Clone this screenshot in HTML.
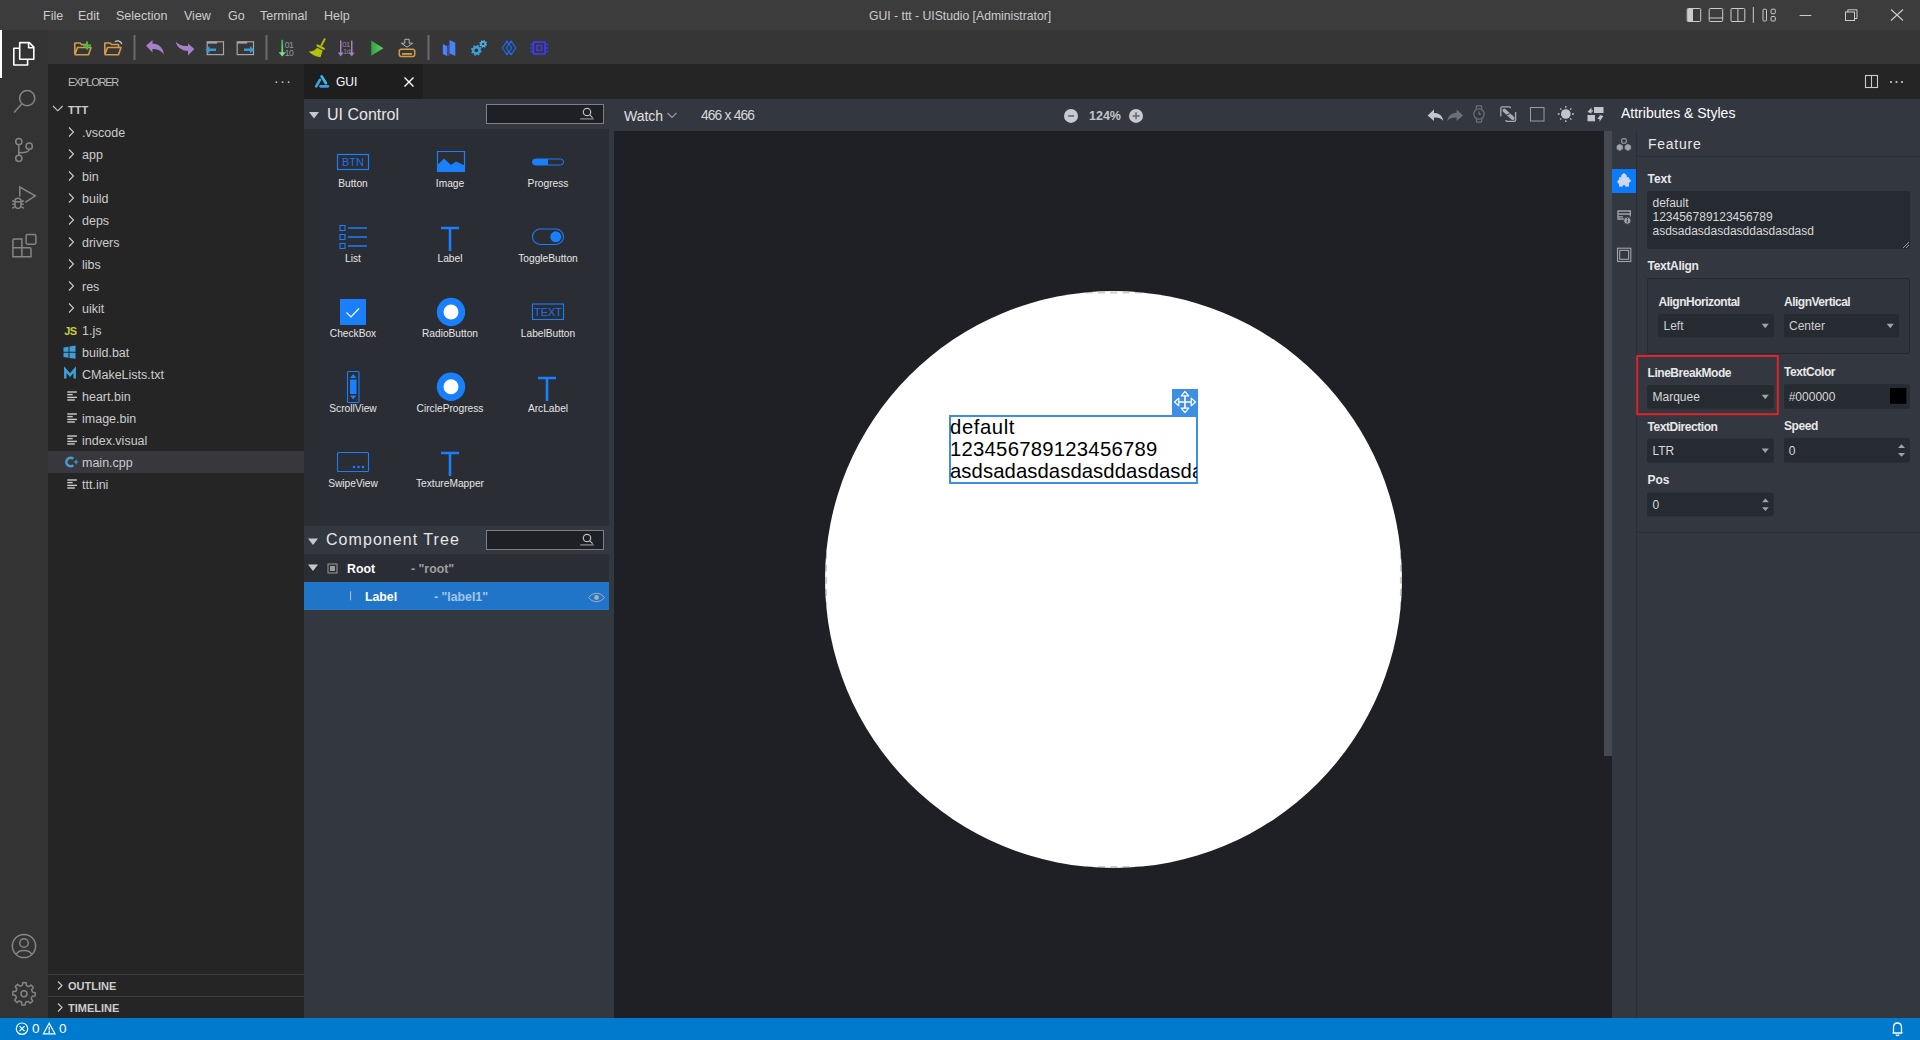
<!DOCTYPE html>
<html><head><meta charset="utf-8">
<style>
*{box-sizing:border-box;margin:0;padding:0}
html,body{width:1920px;height:1040px;overflow:hidden;background:#1e2025;font-family:"Liberation Sans",sans-serif}
.a{position:absolute}
svg{position:absolute;overflow:visible}
#title{left:0;top:0;width:1920px;height:30px;background:#3c3c3c}
.menu{top:8px;font-size:12.5px;color:#cccccc;line-height:16px}
#actbar{left:0;top:30px;width:48px;height:988px;background:#333333}
#toolbar{left:48px;top:30px;width:1872px;height:34px;background:#363636}
#side{left:48px;top:64px;width:256px;height:954px;background:#252526}
.row{left:48px;width:256px;height:22px;font-size:12.5px;color:#cccccc;line-height:22px}
#tabs{left:304px;top:64px;width:1616px;height:35px;background:#252526}
#status{left:0;top:1018px;width:1920px;height:22px;background:#007acc}
#uic{left:304px;top:99px;width:310px;height:919px;background:#333740}
#grid{left:304px;top:129px;width:305px;height:397px;background:#2a2d34}
#tree{left:304px;top:554px;width:305px;height:56px;background:#2a2d34}
#wbar{left:614px;top:99px;width:1306px;height:32px;background:#333740}
#canvas{left:614px;top:131px;width:998px;height:887px;background:#1e2025}
#attr{left:1604px;top:131px;width:316px;height:887px;background:#333740}
.gl{font-size:10.2px;color:#e6e6e6;text-align:center;width:98px;line-height:12px}
.lab{font-size:12px;font-weight:bold;color:#e8e8e8;line-height:14px}
.sel{background:#262a31;height:24px;font-size:12px;color:#cfcfcf;line-height:24px;padding-left:6px;border-radius:2px}
</style></head><body>
<!-- TITLE BAR -->
<div id="title" class="a"></div>
<div class="a menu" style="left:43px">File</div>
<div class="a menu" style="left:78px">Edit</div>
<div class="a menu" style="left:116px">Selection</div>
<div class="a menu" style="left:184px">View</div>
<div class="a menu" style="left:228px">Go</div>
<div class="a menu" style="left:260px">Terminal</div>
<div class="a menu" style="left:324px">Help</div>
<div class="a menu" style="left:869px;font-size:12.2px">GUI - ttt - UIStudio [Administrator]</div>

<div id="actbar" class="a"></div>
<div id="toolbar" class="a"></div>

<!-- TOOLBAR ICONS -->
<svg style="left:0;top:0" width="1920" height="64">
 <!-- window controls -->
 <g fill="none" stroke="#cccccc" stroke-width="1">
  <rect x="1687.2" y="8.5" width="13.5" height="13" rx="1"/>
  <rect x="1709.2" y="8.5" width="13.5" height="13" rx="1"/><path d="M1709.2 18 H1722.7"/>
  <rect x="1731" y="8.5" width="13.8" height="13" rx="1"/><path d="M1737.9 8.5 V21.5"/>
  <path d="M1753.3 7 V22.8"/>
  <rect x="1763" y="9.2" width="3.5" height="11.8" rx="1"/><rect x="1771" y="9.2" width="4.3" height="4.5" rx="1"/><rect x="1771" y="16.5" width="4.3" height="4.5" rx="1"/>
  <path d="M1799.6 15.5 H1811.3"/>
  <rect x="1845.5" y="12" width="9" height="8.5"/><path d="M1847.8 12 V9.8 H1857 V18.5 H1854.5"/>
  <path d="M1891 9.5 L1903 20.5 M1903 9.5 L1891 20.5" stroke-width="1.1"/>
 </g>
 <rect x="1687.5" y="9" width="5.5" height="12" fill="#cccccc"/>
 <!-- separators -->
 <g fill="#6a6a6a"><rect x="133.5" y="35" width="2" height="25"/><rect x="265.5" y="35" width="2" height="25"/><rect x="427.5" y="35" width="2" height="25"/></g>
 <!-- folder + -->
 <g fill="none" stroke="#d39a4a" stroke-width="1.6" stroke-linejoin="round">
  <path d="M74.8 54.8 V43 H80 L81.5 44.5 H88 M74.8 54.8 H88.5 L91 47.5 H77.5 L74.8 54.8"/>
  <path d="M104.8 54.8 V43 H110 L111.5 44.5 H118.5 V47.5 M104.8 54.8 H118.5 L121 47.5 H107.5 L104.8 54.8"/>
 </g>
 <path d="M87 41.5 V49.5 M83 45.5 H91" stroke="#3ec24a" stroke-width="2"/>
 <path d="M115 41.8 C117.5 40 121 41 121.8 44" fill="none" stroke="#c8c8c8" stroke-width="1.3"/>
 <!-- undo / redo purple -->
 <path d="M146 45.8 L152.5 40 V43.6 C158 43.6 163 47 164 54.5 C161 50.5 157.5 49 152.5 49 V52.5 Z" fill="#a77ec8"/>
 <path d="M194.4 49 L188 43.5 V46 C182.5 46.5 178 44.5 175.6 41.5 C177 47.5 181.5 50.5 188 51 V55.5 Z" fill="#a77ec8"/>
 <!-- window arrows -->
 <g fill="none" stroke="#a6a6a6" stroke-width="1.2"><rect x="207.2" y="41.8" width="16.3" height="12.8"/><rect x="237.2" y="41.8" width="16.3" height="12.8"/></g>
 <g fill="#a6a6a6"><rect x="207.2" y="41.8" width="10" height="1.8"/><rect x="237.2" y="41.8" width="10" height="1.8"/></g>
 <path d="M205.5 49.8 L209.5 46 V48.5 H216 V51 H209.5 V53.5 Z" fill="#3a9ad8"/>
 <path d="M254 49.8 L250 46 V48.5 H244 V51 H250 V53.5 Z" fill="#3a9ad8"/>
 <!-- binary down -->
 <defs><linearGradient id="gg" x1="0" y1="0" x2="0" y2="1"><stop offset="0" stop-color="#3cb44a"/><stop offset="1" stop-color="#7ee08a"/></linearGradient>
 <linearGradient id="pg" x1="0" y1="0" x2="1" y2="0"><stop offset="0" stop-color="#2ea33c"/><stop offset="1" stop-color="#62d070"/></linearGradient></defs>
 <rect x="281.4" y="39.8" width="1.7" height="13" fill="url(#gg)"/>
 <path d="M278.6 52.3 H285.9 L282.25 56.6 Z" fill="#7ee08a"/>
 <text x="284.8" y="47.7" font-family="Liberation Sans" font-size="8.6" letter-spacing="-0.6" fill="#8d9aa8">01</text>
 <text x="284.8" y="56" font-family="Liberation Sans" font-size="8.6" letter-spacing="-0.6" fill="#8d9aa8">10</text>
 <!-- broom -->
 <path d="M324.6 39.2 L321.3 45.6" stroke="#b4c10a" stroke-width="1.9" stroke-linecap="round"/>
 <path d="M317.5 45.5 L323.8 48.7" stroke="#b4c10a" stroke-width="2.2" stroke-linecap="round"/>
 <path d="M317 47.8 L322.6 50.6 L320.5 57.2 C315.5 56.8 311.2 54.3 308.8 51.6 C312.8 51.4 315.5 50 317 47.8Z" fill="#b4c10a"/>
 <!-- binary purple -->
 <rect x="340" y="40.5" width="1.5" height="13" fill="#a77ec8"/><rect x="351" y="40.5" width="1.5" height="13" fill="#a77ec8"/>
 <path d="M337.8 52.5 H343.7 L340.75 56.6Z M348.8 52.5 H354.7 L351.75 56.6Z" fill="#a77ec8"/>
 <text x="342.3" y="47" font-family="Liberation Sans" font-size="7.6" letter-spacing="-0.5" fill="#9a8aa6">01</text>
 <text x="343.3" y="53.5" font-family="Liberation Sans" font-size="7" letter-spacing="-0.5" fill="#8a8a9a">1d</text>
 <!-- play -->
 <path d="M371.2 40.6 L383.4 48.2 L371.2 55.8 Z" fill="url(#pg)"/>
 <!-- download -->
 <path d="M404.8 39.3 H409.2 V43.2 H412.6 L407 47.2 L401.4 43.2 H404.8 Z" fill="none" stroke="#c0c0c0" stroke-width="0.9" stroke-linejoin="round"/>
 <rect x="399.3" y="49.2" width="15.4" height="7.3" rx="2" fill="none" stroke="#d39a4a" stroke-width="1.5"/>
 <rect x="402" y="53" width="10" height="1.8" fill="#d39a4a"/>
 <!-- blue bars -->
 <path d="M442.8 44 L447 46 V56 L442.8 54Z" fill="#4a82f5"/>
 <path d="M447 46 L449.5 44.5 V56 L447 56Z" fill="#3c4a8a"/>
 <path d="M449.5 40 L455.3 42.8 V56 L449.5 53.5Z" fill="#4a82f5"/>
 <!-- gears -->
 <path d="M480.60 50.30 L481.83 51.16 L481.39 52.60 L479.89 52.63 L479.37 53.27 L479.63 54.75 L478.30 55.46 L477.22 54.42 L476.40 54.50 L475.54 55.73 L474.10 55.29 L474.07 53.79 L473.43 53.27 L471.95 53.53 L471.24 52.20 L472.28 51.12 L472.20 50.30 L470.97 49.44 L471.41 48.00 L472.91 47.97 L473.43 47.33 L473.17 45.85 L474.50 45.14 L475.58 46.18 L476.40 46.10 L477.26 44.87 L478.70 45.31 L478.73 46.81 L479.37 47.33 L480.85 47.07 L481.56 48.40 L480.52 49.48Z M478.30 50.30 A1.9 1.9 0 1 0 474.50 50.30 A1.9 1.9 0 1 0 478.30 50.30Z" fill="#3a9fd8" fill-rule="evenodd"/>
 <path d="M486.20 43.90 L487.15 44.53 L486.83 45.57 L485.69 45.57 L485.32 46.02 L485.55 47.14 L484.58 47.65 L483.79 46.84 L483.20 46.90 L482.57 47.85 L481.53 47.53 L481.53 46.39 L481.08 46.02 L479.96 46.25 L479.45 45.28 L480.26 44.49 L480.20 43.90 L479.25 43.27 L479.57 42.23 L480.71 42.23 L481.08 41.78 L480.85 40.66 L481.82 40.15 L482.61 40.96 L483.20 40.90 L483.83 39.95 L484.87 40.27 L484.87 41.41 L485.32 41.78 L486.44 41.55 L486.95 42.52 L486.14 43.31Z M484.40 43.90 A1.2 1.2 0 1 0 482.00 43.90 A1.2 1.2 0 1 0 484.40 43.90Z" fill="#4aaee0" fill-rule="evenodd"/>
 <!-- diamond -->
 <g fill="none" stroke="#1a6cff" stroke-width="1.2" stroke-linejoin="round"><path d="M507 41.4 L502.3 48 L507 54.5 M511.2 41.4 L515.9 48 L511.2 54.5 M507 41.4 L509 44 L511.2 41.4 M507 54.5 L509 52 L511.2 54.5 M509 44 L506.3 48 L509 52 L511.7 48 Z"/></g>
 <g fill="#1a6cff"><circle cx="507" cy="41.6" r="1"/><circle cx="511.2" cy="41.6" r="1"/><circle cx="507" cy="54.3" r="1"/><circle cx="511.2" cy="54.3" r="1"/><circle cx="509" cy="44" r="0.9"/><circle cx="509" cy="52" r="0.9"/></g>
 <!-- chip -->
 <rect x="533.3" y="42.1" width="11.8" height="11.8" rx="0.5" fill="none" stroke="#3b3bf0" stroke-width="1.9"/>
 <rect x="536.8" y="45.6" width="4.8" height="4.8" fill="none" stroke="#3b3bf0" stroke-width="1.5"/>
 <g stroke="#3b3bf0" stroke-width="1.3"><path d="M530.3 44.5 H533 M530.3 48 H533 M530.3 51.5 H533 M545.5 44.5 H548.3 M545.5 48 H548.3 M545.5 51.5 H548.3"/></g>
</svg>
<!-- ACTIVITY BAR -->
<div class="a" style="left:0;top:30px;width:2px;height:48px;background:#ffffff"></div>
<svg style="left:0;top:0" width="48" height="1040">
 <g fill="none" stroke="#ffffff" stroke-width="1.6" stroke-linejoin="round">
  <path d="M19.7 42.6 H29.3 L33.8 47.1 V59.3 H19.7 Z"/>
  <path d="M28.6 42.6 V47.8 H33.8"/>
  <path d="M19.7 48.3 H13.8 V65 H27.6 V59.5"/>
 </g>
 <g fill="none" stroke="#858585" stroke-width="1.5">
  <circle cx="27.2" cy="98.2" r="7.6"/>
  <path d="M21.7 103.9 L14 112.4"/>
  <circle cx="18.8" cy="141.6" r="3.1"/>
  <circle cx="29.2" cy="146.2" r="3.1"/>
  <circle cx="18.8" cy="158.3" r="3.1"/>
  <path d="M18.8 144.7 V155.2 M29.2 149.3 C29 152.5 25 152.5 18.8 152.8"/>
  <path d="M19.8 196.5 V187 L35.3 195.8 L25.2 202.3"/>
  <path d="M15 200.5 C15 197.5 21 197.5 21 200.5 V205 C21 209.5 15 209.5 15 205 Z"/>
  <path d="M15 201.8 H21"/>
  <path d="M12.3 200.5 L14.8 202 M12.3 204.3 H14.8 M12.3 208.3 L14.8 206.5 M23.7 200.5 L21.2 202 M23.7 204.3 H21.2 M23.7 208.3 L21.2 206.5"/>
  <path d="M12.9 256.8 V240.3 Q12.9 238.9 14.3 238.9 H21.9 V256.8 Z M12.9 247.8 H29.6 Q31 247.8 31 249.2 V256.8 H12.9"/>
  <rect x="26.1" y="234.6" width="9.8" height="9.6" rx="1.4"/>
  <circle cx="24" cy="946" r="11.6"/>
  <circle cx="24" cy="943" r="4.3"/>
  <path d="M16.5 954.5 C17.5 949 30.5 949 31.5 954.5"/>
 </g>
 <g fill="none" stroke="#858585" stroke-width="1.5">
  <path d="M22.32 985.37 L22.85 982.56 L26.20 982.72 L26.46 985.56 L28.78 986.65 L31.13 985.04 L33.40 987.52 L31.57 989.72 L32.43 992.12 L35.24 992.65 L35.08 996.00 L32.24 996.26 L31.15 998.58 L32.76 1000.93 L30.28 1003.20 L28.08 1001.37 L25.68 1002.23 L25.15 1005.04 L21.80 1004.88 L21.54 1002.04 L19.22 1000.95 L16.87 1002.56 L14.60 1000.08 L16.43 997.88 L15.57 995.48 L12.76 994.95 L12.92 991.60 L15.76 991.34 L16.85 989.02 L15.24 986.67 L17.72 984.40 L19.92 986.23Z" stroke-linejoin="round"/>
  <circle cx="24" cy="993.8" r="3"/>
 </g>
</svg>

<div id="side" class="a"></div>

<!-- EXPLORER -->
<div class="a" style="left:68px;top:75px;font-size:11px;color:#bbbbbb;line-height:14px;letter-spacing:-1.25px">EXPLORER</div>
<div class="a" style="left:274px;top:73px;font-size:14px;color:#cccccc;letter-spacing:1.5px">&middot;&middot;&middot;</div>
<div class="a" style="left:48px;top:451px;width:256px;height:22px;background:#37373d"></div>
<svg style="left:0;top:0" width="320" height="1040">
 <g fill="none" stroke="#cccccc" stroke-width="1.1">
  <path d="M53 106 L57.8 110.8 L62.6 106"/>
  <path d="M69 127.5 L73.5 132 L69 136.5 M69 149.5 L73.5 154 L69 158.5 M69 171.5 L73.5 176 L69 180.5 M69 193.5 L73.5 198 L69 202.5 M69 215.5 L73.5 220 L69 224.5 M69 237.5 L73.5 242 L69 246.5 M69 259.5 L73.5 264 L69 268.5 M69 281.5 L73.5 286 L69 290.5 M69 303.5 L73.5 308 L69 312.5"/>
  <path d="M58 981.5 L62 985.5 L58 989.5 M58 1003.5 L62 1007.5 L58 1011.5"/>
 </g>
 <text x="64.3" y="334.6" font-family="Liberation Sans" font-weight="bold" font-size="11" letter-spacing="-0.6" fill="#cbcb41">JS</text>
 <g fill="#3d9fd8"><path d="M63.5 347.5 L68.5 346.7 V351.7 H63.5Z M69.5 346.5 L75.5 345.5 V351.7 H69.5Z M63.5 352.7 H68.5 V357.7 L63.5 357Z M69.5 352.7 H75.5 V358.8 L69.5 358Z"/></g>
 <path d="M65.3 378.6 V369.6 L70 375 L74.7 369.6 V378.6" fill="none" stroke="#3d9fd8" stroke-width="2.5" stroke-linejoin="miter"/>
 <g fill="#cccccc"><rect x="67.3" y="391.3" width="9.6" height="1.4"/><rect x="67.3" y="393.9" width="5.4" height="1.4"/><rect x="67.3" y="396.7" width="9.6" height="1.4"/><rect x="67.3" y="399.3" width="7.5" height="1.4"/><rect x="67.3" y="413.3" width="9.6" height="1.4"/><rect x="67.3" y="415.9" width="5.4" height="1.4"/><rect x="67.3" y="418.7" width="9.6" height="1.4"/><rect x="67.3" y="421.3" width="7.5" height="1.4"/><rect x="67.3" y="435.3" width="9.6" height="1.4"/><rect x="67.3" y="437.9" width="5.4" height="1.4"/><rect x="67.3" y="440.7" width="9.6" height="1.4"/><rect x="67.3" y="443.3" width="7.5" height="1.4"/><rect x="67.3" y="479.3" width="9.6" height="1.4"/><rect x="67.3" y="481.9" width="5.4" height="1.4"/><rect x="67.3" y="484.7" width="9.6" height="1.4"/><rect x="67.3" y="487.3" width="7.5" height="1.4"/></g>
 <path d="M73.3 458.8 A4.2 4.2 0 1 0 73.3 465.2" fill="none" stroke="#4a9ad0" stroke-width="2.6"/>
 <path d="M73.8 462 H78.3 M76.05 459.8 V464.2" stroke="#4a9ad0" stroke-width="1.2"/>
</svg>
<div class="a" style="left:68px;top:103px;font-size:11px;font-weight:bold;color:#cccccc;line-height:14px">TTT</div>
<div class="a" style="left:82px;top:122px;font-size:12.5px;color:#cccccc;line-height:22px">.vscode<br>app<br>bin<br>build<br>deps<br>drivers<br>libs<br>res<br>uikit<br>1.js<br>build.bat<br>CMakeLists.txt<br>heart.bin<br>image.bin<br>index.visual<br>main.cpp<br>ttt.ini</div>
<div class="a" style="left:48px;top:974px;width:256px;height:1px;background:#3e3e3e"></div>
<div class="a" style="left:48px;top:996px;width:256px;height:1px;background:#3e3e3e"></div>
<div class="a" style="left:68px;top:979px;font-size:11px;font-weight:bold;color:#cccccc;line-height:14px">OUTLINE</div>
<div class="a" style="left:68px;top:1001px;font-size:11px;font-weight:bold;color:#cccccc;line-height:14px">TIMELINE</div>
<div id="tabs" class="a"></div>

<!-- TABS -->
<div class="a" style="left:304px;top:64px;width:119px;height:35px;background:#1e1e1e"></div>
<svg style="left:0;top:0" width="1920" height="100">
 <g stroke-linecap="round" stroke-width="2.7" fill="none">
  <path d="M321.6 76.3 L325.9 83.2" stroke="#40b8e5"/>
  <path d="M319.9 79.8 L316.2 86.3" stroke="#3aa4e0"/>
  <path d="M320.6 86.3 H327.9" stroke="#3a9ce0"/>
 </g>
 <path d="M404.5 77.5 L413.5 86.5 M413.5 77.5 L404.5 86.5" stroke="#ffffff" stroke-width="1.4"/>
 <g fill="none" stroke="#cccccc" stroke-width="1.1"><rect x="1865.5" y="75.5" width="12" height="12"/><path d="M1871.5 75.5 V87.5"/></g>
 <g fill="#cccccc"><circle cx="1891" cy="82" r="1.1"/><circle cx="1896.5" cy="82" r="1.1"/><circle cx="1902" cy="82" r="1.1"/></g>
</svg>
<div class="a" style="left:336px;top:75px;font-size:12px;color:#ffffff;line-height:14px">GUI</div>
<div id="uic" class="a"></div>
<div id="grid" class="a"></div>
<div id="tree" class="a"></div>

<!-- UI CONTROL -->
<svg style="left:0;top:0" width="620" height="620">
 <path d="M309 112 H319 L314 118.5 Z" fill="#c8c8c8"/>
 <path d="M308 538.5 H318 L313 545 Z" fill="#c8c8c8"/>
 <path d="M308 564.5 H318 L313 571 Z" fill="#c8c8c8"/>
 <rect x="486.5" y="104.5" width="117" height="19" fill="#1e2025" stroke="#7e7f82" stroke-width="1"/>
 <rect x="486.5" y="530.5" width="117" height="19" fill="#1e2025" stroke="#7e7f82" stroke-width="1"/>
 <g fill="none" stroke="#bdbdbd" stroke-width="1.2">
  <circle cx="587" cy="112" r="3.7"/><path d="M589.6 114.6 L592.6 117.6"/>
  <circle cx="587" cy="538" r="3.7"/><path d="M589.6 540.6 L592.6 543.6"/>
 </g>
 <g stroke="#6c6d70" stroke-width="1.6"><path d="M580.2 118.9 H593.8 M580.2 544.9 H593.8"/></g>
 <g fill="#1a7ffb" stroke="#1a7ffb">
  <!-- Button -->
  <rect x="337.5" y="154.5" width="31" height="15" fill="none" stroke-width="1.2"/>
  <text x="353" y="166.3" text-anchor="middle" font-family="Liberation Sans" font-size="11" stroke="none" fill="#1e6fe8">BTN</text>
  <!-- Image -->
  <path d="M437.5 151.5 H464.5 V171.5 H437.5 Z" fill="none" stroke-width="1.2"/>
  <path d="M437.5 171.5 V165 L444 158.5 L451 165 L456 161.5 L464.5 165.5 V171.5 Z" stroke="none"/>
  <!-- Progress -->
  <rect x="532.5" y="159" width="31" height="6" rx="3" fill="none" stroke-width="1"/>
  <path d="M535.5 159 H548 V165 H535.5 A3 3 0 0 1 535.5 159Z" stroke="none"/>
  <!-- List -->
  <g fill="none" stroke-width="1.1"><rect x="340" y="225.5" width="5" height="5"/><rect x="340" y="234.5" width="5" height="5"/><rect x="340" y="243.5" width="5" height="5"/></g>
  <path d="M348 228 H367 M348 237 H367 M348 246 H367" stroke-width="1.6"/>
  <!-- Label T -->
  <path d="M441 228 H459 M450 228 V251" fill="none" stroke-width="2.6"/>
  <!-- Toggle -->
  <rect x="532.5" y="229" width="31" height="15.5" rx="7.75" fill="none" stroke-width="1.1"/>
  <circle cx="555.8" cy="236.8" r="5.5" stroke="none"/>
  <!-- Checkbox -->
  <rect x="340" y="299" width="26" height="26" stroke="none"/>
  <path d="M346.5 312.5 L351 317 L359 308.5" fill="none" stroke="#ffffff" stroke-width="1.2"/>
  <!-- Radio -->
  <circle cx="451" cy="312" r="14.2" stroke="none"/>
  <circle cx="451" cy="312" r="7.5" fill="#ffffff" stroke="none"/>
  <!-- TEXT -->
  <rect x="532.5" y="304" width="31" height="15.5" fill="none" stroke-width="1.1"/>
  <text x="548" y="316.3" text-anchor="middle" font-family="Liberation Sans" font-size="11" stroke="none" fill="#1e6fe8">TEXT</text>
  <!-- ScrollView -->
  <rect x="347.5" y="371.5" width="11.5" height="31" rx="1" fill="none" stroke-width="1.1"/>
  <path d="M350 378 L353.2 374 L356.5 378 Z M350 395.5 L353.2 399.5 L356.5 395.5Z" stroke="none"/>
  <rect x="350" y="379.5" width="6.5" height="14.5" stroke="none"/>
  <!-- CircleProgress -->
  <circle cx="451" cy="386.8" r="14.2" stroke="none"/>
  <circle cx="451" cy="386.8" r="7.5" fill="#ffffff" stroke="none"/>
  <!-- ArcLabel T -->
  <path d="M538 378 H556 M547 378 V401" fill="none" stroke-width="2.6"/>
  <!-- SwipeView -->
  <rect x="337.5" y="452.5" width="31" height="19" rx="1" fill="none" stroke-width="1.1"/>
  <circle cx="354" cy="467" r="1.3" stroke="none"/><circle cx="358.5" cy="467" r="1.3" stroke="none"/><circle cx="363" cy="467" r="1.3" stroke="none"/>
  <!-- TextureMapper T -->
  <path d="M441 453 H459 M450 453 V476" fill="none" stroke-width="2.6"/>
 </g>
</svg>
<div class="a" style="left:327px;top:105.5px;font-size:16px;color:#e6e6e6;line-height:18px">UI Control</div>
<div class="a gl" style="left:304px;top:178px">Button</div>
<div class="a gl" style="left:401px;top:178px">Image</div>
<div class="a gl" style="left:499px;top:178px">Progress</div>
<div class="a gl" style="left:304px;top:253px">List</div>
<div class="a gl" style="left:401px;top:253px">Label</div>
<div class="a gl" style="left:499px;top:253px">ToggleButton</div>
<div class="a gl" style="left:304px;top:328px">CheckBox</div>
<div class="a gl" style="left:401px;top:328px">RadioButton</div>
<div class="a gl" style="left:499px;top:328px">LabelButton</div>
<div class="a gl" style="left:304px;top:403px">ScrollView</div>
<div class="a gl" style="left:401px;top:403px">CircleProgress</div>
<div class="a gl" style="left:499px;top:403px">ArcLabel</div>
<div class="a gl" style="left:304px;top:478px">SwipeView</div>
<div class="a gl" style="left:401px;top:478px">TextureMapper</div>
<!-- COMPONENT TREE -->
<div class="a" style="left:326px;top:531px;font-size:16px;color:#e6e6e6;line-height:18px;letter-spacing:1.05px">Component Tree</div>
<div class="a" style="left:304px;top:582px;width:305px;height:28px;background:#2175c9"></div>
<svg style="left:0;top:0" width="620" height="620">
 <g fill="#9a9a9a"><rect x="328" y="564" width="9" height="9" fill="none" stroke="#9a9a9a" stroke-width="1"/><rect x="330" y="566" width="5" height="5"/></g>
 <rect x="350" y="591.3" width="1.1" height="9" fill="#a8bcd4"/>
 <g fill="none" stroke="#a9adb5" stroke-width="1"><path d="M588.8 597.5 C592 592 601 592 604.2 597.5 C601 603 592 603 588.8 597.5Z"/></g>
 <circle cx="596.5" cy="597.5" r="2.4" fill="#a9adb5"/>
</svg>
<div class="a" style="left:347px;top:562px;font-size:12.3px;font-weight:bold;color:#ffffff;line-height:14px">Root</div>
<div class="a" style="left:411px;top:562px;font-size:12.3px;font-weight:bold;color:#a0a0a0;line-height:14px;letter-spacing:0px">- "root"</div>
<div class="a" style="left:365px;top:590px;font-size:12.3px;font-weight:bold;color:#ffffff;line-height:14px">Label</div>
<div class="a" style="left:434px;top:590px;font-size:12.3px;font-weight:bold;color:#a3c5ea;line-height:14px;letter-spacing:0px">- "label1"</div>
<div id="wbar" class="a"></div>
<div id="canvas" class="a"></div>
<div id="attr" class="a" style="left:1612px"></div>
<!-- WATCH BAR -->
<div class="a" style="left:624px;top:108px;font-size:14px;color:#e0e0e0;line-height:16px">Watch</div>
<div class="a" style="left:701px;top:108px;font-size:13.8px;color:#d8d8d8;line-height:16px;letter-spacing:-0.9px;word-spacing:0.3px">466 x 466</div>
<div class="a" style="left:1089px;top:109px;font-size:12.5px;font-weight:bold;color:#c3c5ca;line-height:14px">124%</div>
<svg style="left:0;top:0" width="1920" height="140">
 <path d="M667.5 113 L672 117.5 L676.5 113" fill="none" stroke="#9a9da3" stroke-width="1.1"/>
 <circle cx="1071" cy="115.9" r="7" fill="#c8cacf"/><rect x="1068" y="115.1" width="6.2" height="1.7" fill="#6e7177"/>
 <circle cx="1136" cy="115.9" r="7" fill="#c8cacf"/><rect x="1132.6" y="115.1" width="7" height="1.7" fill="#6e7177"/><rect x="1135.2" y="112.3" width="1.7" height="7" fill="#6e7177"/>
 <!-- undo / redo -->
 <path d="M1427.6 115.5 L1434 109.5 V113 C1439 113 1442.5 115.5 1443.3 121 C1441 118 1438 117.3 1434 117.5 V121 Z" fill="#c3c5ca"/>
 <path d="M1463 115.5 L1456.6 109.5 V113 C1451.6 113 1448.1 115.5 1447.3 121 C1449.6 118 1452.6 117.3 1456.6 117.5 V121 Z" fill="#6c6f75"/>
 <!-- watch -->
 <g fill="none" stroke="#6c6f75" stroke-width="1.3"><circle cx="1479" cy="114" r="5.2"/><path d="M1476 108.8 L1476.8 105.8 H1481.2 L1482 108.8 M1476 119.2 L1476.8 122.2 H1481.2 L1482 119.2 M1479 111.5 V114.2 H1481"/></g>
 <!-- resize -->
 <g fill="none" stroke="#a9acb1" stroke-width="1.3"><path d="M1500.8 116.3 V108.3 Q1500.8 106.9 1502.2 106.9 H1509.2 Q1510.6 106.9 1510.6 108.3"/><path d="M1515.6 112 V120 Q1515.6 121.4 1514.2 121.4 H1507.2 Q1505.8 121.4 1505.8 120"/></g>
 <path d="M1504.3 110.5 L1512.7 118.2" stroke="#a9acb1" stroke-width="3.6" stroke-linecap="round"/>
 <path d="M1506.5 114.8 L1510.3 113.6" stroke="#333740" stroke-width="0.9"/>
 <!-- square -->
 <rect x="1530.5" y="107.5" width="13.5" height="13.5" fill="none" stroke="#9a9da3" stroke-width="1"/>
 <!-- sun -->
 <g fill="#c3c5ca"><circle cx="1565.8" cy="114" r="4.8"/><g stroke="#c3c5ca" stroke-width="1.3"><path d="M1565.8 106 V107.8 M1565.8 120.2 V122 M1557.8 114 H1559.6 M1572 114 H1573.8 M1560.2 108.4 L1561.4 109.6 M1570.2 118.4 L1571.4 119.6 M1560.2 119.6 L1561.4 118.4 M1570.2 109.6 L1571.4 108.4"/></g></g>
 <!-- last icon -->
 <g fill="#c3c5ca"><rect x="1594" y="107" width="9.5" height="6"/><rect x="1587.5" y="115" width="7.5" height="6.3"/><path d="M1587.5 112 L1591.5 107.5 V110.2 H1593 V111.6 H1591.5 V113.6Z"/><path d="M1603.4 116 L1599.5 121.8 V119 H1597.3 L1600.5 114.8 H1598.5Z"/></g>
</svg>
<!-- CANVAS -->
<svg style="left:0;top:0" width="1610" height="1018">
 <circle cx="1113.5" cy="579.5" r="288.5" fill="#ffffff"/>
 <defs><clipPath id="cc"><circle cx="1113.5" cy="579.5" r="288.5"/></clipPath></defs>
 <g clip-path="url(#cc)" stroke="rgba(0,0,0,0.2)" stroke-width="2.2" stroke-dasharray="7 5.3" stroke-dashoffset="-1.4" fill="none"><path d="M826 292.5 H1401"/><path d="M826 867 H1401"/><path d="M826 292.5 V867"/><path d="M1401 292.5 V867"/></g>
 <rect x="950" y="416" width="247" height="67" fill="none" stroke="#3c8fe3" stroke-width="2"/>
 <rect x="1172" y="389" width="26" height="26" fill="#3c8fe3"/>
 <g fill="none" stroke="#ffffff" stroke-width="1.6"><path d="M1185 395 V409 M1178 402 H1192"/></g>
 <g fill="#3c8fe3" stroke="#ffffff" stroke-width="1.2" stroke-linejoin="round"><path d="M1185 391.5 L1188.8 395.8 H1181.2Z M1185 412.5 L1188.8 408.2 H1181.2Z M1174.5 402 L1178.8 398.2 V405.8Z M1195.5 402 L1191.2 398.2 V405.8Z"/></g>
</svg>
<div class="a" style="left:949px;top:415px;width:248px;height:68px;overflow:hidden">
 <div style="position:absolute;left:1px;top:0.7px;font-size:20.3px;color:#000000;line-height:22.2px;white-space:pre"><span style="letter-spacing:0.6px">default</span>
<span style="letter-spacing:0.25px">123456789123456789</span>
<span style="letter-spacing:0.08px">asdsadasdasdasddasdasdasd</span></div>
</div>
<div class="a" style="left:1604px;top:131px;width:8px;height:625px;background:#46494f"></div>

<div id="status" class="a"></div>


<!-- ATTRIBUTES -->
<div class="a" style="left:1621px;top:105px;font-size:14px;color:#ffffff;line-height:16px">Attributes &amp; Styles</div>
<div class="a" style="left:1636px;top:131px;width:1px;height:887px;background:#2a2d33"></div>
<div class="a" style="left:1637px;top:156px;width:283px;height:1px;background:#2a2d33"></div>
<div class="a" style="left:1612px;top:169px;width:24px;height:24px;background:#0b7bfa"></div>
<div class="a" style="left:1648px;top:136px;font-size:14px;color:#e8e8e8;line-height:16px;letter-spacing:0.75px">Feature</div>
<svg style="left:0;top:0" width="1920" height="540">
 <circle cx="1624" cy="140.9" r="2.4" fill="none" stroke="#a0a3a8" stroke-width="1.1"/>
 <path d="M1619.8 144.2 L1622.6 145.8 V149 L1619.8 150.6 L1617 149 V145.8Z M1627.9 144.2 L1630.7 145.8 V149 L1627.9 150.6 L1625.1 149 V145.8Z" fill="#a0a3a8" stroke="#a0a3a8" stroke-width="0.6" stroke-linejoin="round"/>
 <path d="M1619.5 177.5 H1621.8 C1621.3 175.2 1622.4 173.8 1624 173.8 C1625.6 173.8 1626.7 175.2 1626.2 177.5 H1628.5 V179.2 C1630.8 178.6 1631.5 182.6 1628.5 182.2 V186.2 H1625.6 C1626.1 184.2 1621.9 184.2 1622.4 186.2 H1619.5 V183.4 C1617.2 183.9 1617.2 179.6 1619.5 180.1 Z" fill="#cdd8ef" stroke="#cdd8ef" stroke-width="0.8" stroke-linejoin="round"/>
 <g fill="none" stroke="#a0a3a8" stroke-width="1.3"><path d="M1624 219 H1618 V211 H1630.3 V216.5"/></g>
 <rect x="1618" y="213.3" width="12.3" height="1.5" fill="#a0a3a8"/><rect x="1618" y="216.2" width="5" height="1.3" fill="#a0a3a8"/>
 <circle cx="1627.3" cy="220.6" r="3.6" fill="#a0a3a8" stroke="#333740" stroke-width="0.8"/><rect x="1626.8" y="219.6" width="1.1" height="3" fill="#333740"/><rect x="1626.8" y="218" width="1.1" height="1" fill="#333740"/>
 <g fill="none" stroke="#a0a3a8" stroke-width="1.1"><rect x="1617.5" y="248.2" width="13.3" height="13.3"/><rect x="1619.7" y="250.4" width="8.9" height="8.9"/></g>
 <!-- textarea -->
 <rect x="1647" y="191" width="263" height="58" rx="2" fill="#262a31"/>
 <path d="M1903 248 L1909 242 M1906 248 L1909 245" stroke="#9a9a9a" stroke-width="1"/>
 <!-- textalign box -->
 <rect x="1647.5" y="278.5" width="262" height="75" rx="1.5" fill="#30343c" stroke="#262a30" stroke-width="1"/>
 <rect x="1658" y="314" width="116" height="23.5" rx="2" fill="#262a31"/>
 <rect x="1784" y="314" width="115" height="23.5" rx="2" fill="#262a31"/>
 <path d="M1761.7 323.8 H1768.8 L1765.25 328.3Z M1886.7 323.8 H1893.8 L1890.25 328.3Z" fill="#a0a3a8"/>
 <!-- red box -->
 <rect x="1637.2" y="356" width="140.6" height="58.2" fill="none" stroke="#e0232b" stroke-width="2"/>
 <rect x="1647" y="385" width="126.8" height="23.8" rx="2" fill="#262a31"/>
 <path d="M1761.7 394.8 H1768.8 L1765.25 399.3Z" fill="#a0a3a8"/>
 <rect x="1784" y="384.3" width="126" height="24.5" rx="2" fill="#262a31"/>
 <rect x="1890" y="388" width="16.3" height="15.8" fill="#000000"/>
 <rect x="1647" y="438.8" width="126.8" height="23.8" rx="2" fill="#262a31"/>
 <path d="M1761.7 448.5 H1768.8 L1765.25 453Z" fill="#a0a3a8"/>
 <rect x="1784" y="438" width="126" height="24.5" rx="2" fill="#262a31"/>
 <path d="M1898 448 L1901.5 444.2 L1905 448Z M1898 453 L1901.5 456.8 L1905 453Z" fill="#a0a3a8"/>
 <rect x="1647" y="492.5" width="126.8" height="23.8" rx="2" fill="#262a31"/>
 <path d="M1762 502.3 L1765.4 498.5 L1768.8 502.3Z M1762 507.2 L1765.4 511 L1768.8 507.2Z" fill="#a0a3a8"/>
 <rect x="1637" y="532" width="283" height="1" fill="#2a2d33"/>
</svg>
<div class="a lab" style="left:1647.5px;top:172px">Text</div>
<div class="a" style="left:1652.5px;top:196px;font-size:12px;color:#d8d8d8;line-height:14px;white-space:pre">default
123456789123456789
asdsadasdasdasddasdasdasd</div>
<div class="a lab" style="left:1647.5px;top:259px;letter-spacing:-0.3px">TextAlign</div>
<div class="a lab" style="left:1658.5px;top:295px;letter-spacing:-0.5px">AlignHorizontal</div>
<div class="a lab" style="left:1784px;top:295px;letter-spacing:-0.5px">AlignVertical</div>
<div class="a" style="left:1663.5px;top:319px;font-size:12px;color:#cfcfcf;line-height:14px">Left</div>
<div class="a" style="left:1789px;top:319px;font-size:12px;color:#cfcfcf;line-height:14px">Center</div>
<div class="a lab" style="left:1647.5px;top:366px;letter-spacing:-0.45px">LineBreakMode</div>
<div class="a lab" style="left:1784px;top:365px;letter-spacing:-0.45px">TextColor</div>
<div class="a" style="left:1652.5px;top:390px;font-size:12px;color:#d8d8d8;line-height:14px">Marquee</div>
<div class="a" style="left:1788.7px;top:390px;font-size:12px;color:#d8d8d8;line-height:14px">#000000</div>
<div class="a lab" style="left:1647.5px;top:420px;letter-spacing:-0.45px">TextDirection</div>
<div class="a lab" style="left:1784px;top:419px;letter-spacing:-0.45px">Speed</div>
<div class="a" style="left:1652.5px;top:444px;font-size:12px;color:#d8d8d8;line-height:14px">LTR</div>
<div class="a" style="left:1788.7px;top:444px;font-size:12px;color:#d8d8d8;line-height:14px">0</div>
<div class="a lab" style="left:1647.5px;top:473px">Pos</div>
<div class="a" style="left:1652.5px;top:498px;font-size:12px;color:#d8d8d8;line-height:14px">0</div>
<!-- STATUS -->
<svg style="left:0;top:1018px" width="1920" height="22">
 <g fill="none" stroke="#ffffff" stroke-width="1.2"><circle cx="22" cy="10.7" r="5.7"/><path d="M19.5 8.2 L24.5 13.2 M24.5 8.2 L19.5 13.2"/><path d="M49.2 5.3 L55 15.8 H43.4 Z M49.2 8.8 V12.5"/><circle cx="49.2" cy="14" r="0.3"/></g>
 <path d="M1893.5 15 V9.5 C1893.5 6.5 1895.5 5 1897.5 5 C1899.5 5 1901.5 6.5 1901.5 9.5 V15 H1893.5 M1892.5 15 H1902.5 M1896 16.5 C1896.5 18 1898.5 18 1899 16.5" fill="none" stroke="#ffffff" stroke-width="1.3"/>
</svg>
<div class="a" style="left:32px;top:1021px;font-size:13.5px;color:#ffffff;line-height:16px">0</div>
<div class="a" style="left:59px;top:1021px;font-size:13.5px;color:#ffffff;line-height:16px">0</div>
</body></html>
